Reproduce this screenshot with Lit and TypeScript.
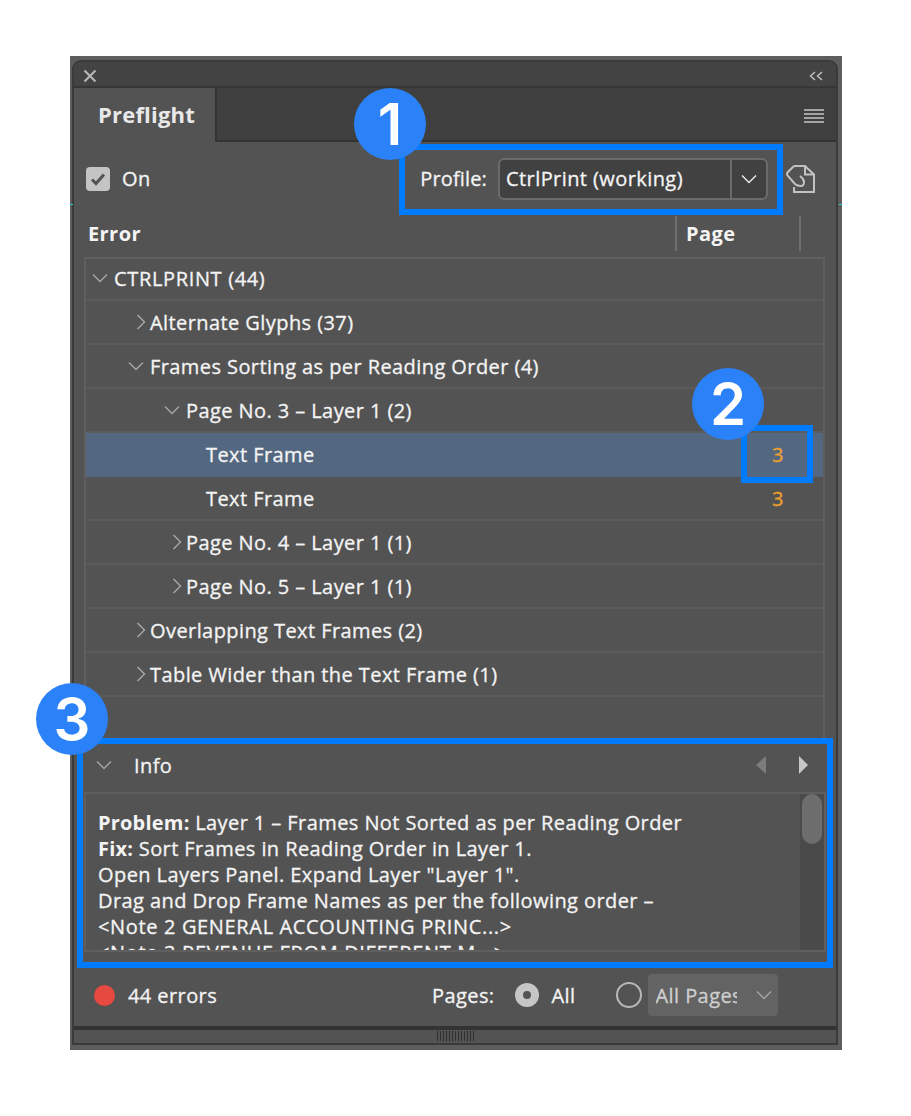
import { LitElement, html, css } from "lit";
import { customElement } from "lit/decorators.js";

const down = (c = "#a4a4a4") => html`<svg class="chev" width="16" height="10" viewBox="0 0 16 10"><path d="M1 1.500 8 8.500l7-7" fill="none" stroke=${c} stroke-width="1.500"/></svg>`;
const right = () => html`<svg class="chev-r" width="10" height="18" viewBox="0 0 10 18"><path d="M1.500 2 8.500 9l-7 7" fill="none" stroke="#a4a4a4" stroke-width="1.500"/></svg>`;

type Row = { text: string; chev: "d" | "r" | ""; x: number; page?: string; sel?: boolean; caps?: boolean };
const rows: Row[] = [
  { text: "CTRLPRINT (44)", chev: "d", x: 6, caps: true },
  { text: "Alternate Glyphs (37)", chev: "r", x: 50 },
  { text: "Frames Sorting as per Reading Order (4)", chev: "d", x: 42 },
  { text: "Page No. 3 – Layer 1 (2)", chev: "d", x: 78 },
  { text: "Text Frame", chev: "", x: 120, page: "3", sel: true },
  { text: "Text Frame", chev: "", x: 120, page: "3" },
  { text: "Page No. 4 – Layer 1 (1)", chev: "r", x: 86 },
  { text: "Page No. 5 – Layer 1 (1)", chev: "r", x: 86 },
  { text: "Overlapping Text Frames (2)", chev: "r", x: 50 },
  { text: "Table Wider than the Text Frame (1)", chev: "r", x: 50 },
];

@customElement("app-root")
export class AppRoot extends LitElement {
  static styles = css`
    :host { display: block; width: 911px; height: 1116px; background: #fff; font-family: "Open Sans", "Liberation Sans", sans-serif; font-size: 20px; letter-spacing: 0.42px; -webkit-text-stroke: 0.3px currentColor; color: #f4f4f4; position: relative; overflow: hidden; }
    * { box-sizing: border-box; }
    .wrap { padding: 56px 0 0 70px; }
    .outer { width: 772px; height: 994px; background: #5d5d5d; padding: 4px 4px 5px 2px; position: relative; }
    .tick { position: absolute; top: 148px; width: 3px; height: 1px; background: #19d6d6; }
    .inner { height: 100%; border: 2px solid #3a3a3a; border-radius: 9px 9px 0 0; background: #535353; display: flex; flex-direction: column; overflow: hidden; }
    .titlebar { height: 26px; flex: none; background: #434343; border-bottom: 2px solid #363636; display: flex; align-items: center; justify-content: space-between; padding: 4px 13px 0 9px; }
    .tabrow { height: 54px; flex: none; background: #3f3f3f; border-bottom: 2px solid #333; display: flex; justify-content: space-between; }
    .tab { width: 143px; height: 54px; background: #535353; border-right: 2px solid #333; font-weight: 700; font-size: 22px; letter-spacing: 0.2px; -webkit-text-stroke: 0; color: #e8e8e8; padding-left: 24px; line-height: 52px; }
    .menu { width: 20px; margin: 21px 12px 0 0; display: flex; flex-direction: column; gap: 2px; }
    .menu i { display: block; height: 2px; background: #a4a4a4; }
    .toolbar { height: 73px; flex: none; display: flex; align-items: center; padding: 0 20px 0 12px; }
    .check { width: 24px; height: 24px; border-radius: 4px; background: #c4c4c4; display: flex; align-items: center; justify-content: center; margin: 0 12px 0 0; }
    .on { flex: 1; }
    .prof { margin-right: 11px; letter-spacing: 0.15px; }
    .select { width: 270px; height: 42px; background: #414141; border: 2px solid #6b6b6b; border-radius: 6px; display: flex; align-items: center; }
    .select .v { flex: 1; padding-left: 6px; }
    .select .b { width: 36px; height: 100%; border-left: 2px solid #6b6b6b; display: flex; align-items: center; justify-content: center; }
    .select .chev { margin-right: 0; }
    .docicon { margin-left: 18px; display: block; }
    .colhead { height: 36px; flex: none; display: flex; font-weight: 700; -webkit-text-stroke: 0; padding: 1px 0 0 14px; margin-bottom: 6px; }
    .colhead .e { width: 587px; line-height: 36px; }
    .colhead .p { width: 126px; height: 35px; border-left: 2px solid #6e6e6e; border-right: 2px solid #6e6e6e; padding-left: 9px; line-height: 36px; }
    .tree { height: 484px; flex: none; margin: 0 11px 0 10px; border: 2px solid #5f5f5f; border-bottom: none; }
    .row { height: 44px; border-bottom: 2px solid #5c5c5c; display: flex; align-items: center; position: relative; }
    .row.first { height: 42px; padding-bottom: 2px; }
    .row.sel { background: #536880; border-bottom: 2px solid #536880; }
    .chev { flex: none; margin-right: 6px; }
    .chev-r { flex: none; margin-right: 4px; }
    .txt { flex: 1; white-space: nowrap; }
    .caps { letter-spacing: 0.65px; }
    .page { width: 96px; flex: none; color: #efa02c; padding-left: 45px; }
    .infohead { height: 51px; flex: none; display: flex; align-items: center; padding: 0 28px 4px 22px; }
    .infohead .l { flex: 1; padding: 2px 0 0 16px; }
    .infobox { height: 160px; flex: none; margin: 0 10px 0 10px; border: 2px solid #5f5f5f; display: flex; overflow: hidden; }
    .infotext { flex: 1; padding: 16px 0 0 12px; line-height: 26px; white-space: nowrap; overflow: hidden; }
    .infotext b { -webkit-text-stroke: 0; letter-spacing: 0.2px; }
    .scroll { width: 24px; flex: none; background: #4a4a4a; padding: 0 2px; }
    .thumb { height: 50px; background: #6d6d6d; border-radius: 10px; }
    .footer { height: 74px; flex: none; display: flex; align-items: center; padding: 12px 0 0 20px; }
    .dot { width: 21px; height: 21px; border-radius: 50%; background: #e5493f; margin-right: 13px; flex: none; }
    .err { width: 304px; flex: none; }
    .radio { width: 24px; height: 24px; border-radius: 50%; background: #c6c6c6; display: flex; align-items: center; justify-content: center; margin: 0 13px 0 20px; flex: none; }
    .radio i { width: 8px; height: 8px; border-radius: 50%; background: #535353; }
    .all { width: 40px; flex: none; }
    .radio2 { width: 26px; height: 26px; border-radius: 50%; border: 2px solid #b8b8b8; margin: 0 6px 0 24px; flex: none; }
    .pagesel { width: 130px; height: 42px; background: #636363; border-radius: 4px; display: flex; align-items: center; padding-left: 8px; color: #cfcfcf; }
    .pagesel span { width: 83px; overflow: hidden; white-space: nowrap; margin-right: 19px; }
    .splitter { height: 4px; flex: none; background: #333; }
    .grip { flex: 1; background: #535353; display: flex; justify-content: center; gap: 2px; padding-top: 1px; }
    .grip i { width: 1px; height: 10px; background: #2e2e2e; }
    .frame { position: absolute; border: 6px solid #007bfd; }
    .f1 { left: 399px; top: 144px; width: 384px; height: 71px; }
    .f2 { left: 741px; top: 425px; width: 72px; height: 58px; }
    .f3 { left: 77px; top: 738px; width: 756px; height: 230px; }
    .badge { position: absolute; width: 72px; height: 72px; border-radius: 50%; background: #2b82f8; color: #fff; font-family: "Inter", "Liberation Sans", sans-serif; font-weight: 600; font-size: 58px; letter-spacing: 0; -webkit-text-stroke: 0; line-height: 72px; text-align: center; }
    .b1 { left: 354px; top: 88px; }
    .b2 { left: 692px; top: 368px; }
    .b3 { left: 36px; top: 683px; }
  `;

  renderRow(r: Row, i: number) {
    return html`<div class="row ${r.sel ? "sel" : ""} ${i === 0 ? "first" : ""}" style="padding-left:${r.x}px">
      ${r.chev === "d" ? down() : r.chev === "r" ? right() : ""}
      <span class="txt ${r.caps ? "caps" : ""}">${r.text}</span>
      ${r.page ? html`<span class="page">${r.page}</span>` : ""}
    </div>`;
  }

  render() {
    return html`
      <div class="wrap">
        <div class="outer">
          <div class="tick" style="left:0"></div>
          <div class="tick" style="right:0"></div>
          <div class="inner">
            <div class="titlebar">
              <svg width="14" height="14" viewBox="0 0 14 14"><path d="M1.500 1.500l11 11M12.500 1.500l-11 11" stroke="#b4b4b4" stroke-width="2.200"/></svg>
              <svg width="14" height="10" viewBox="0 0 14 10"><path d="M6 1 1.500 5 6 9M13 1 8.500 5 13 9" fill="none" stroke="#c0c0c0" stroke-width="1.500"/></svg>
            </div>
            <div class="tabrow">
              <div class="tab">Preflight</div>
              <div class="menu"><i></i><i></i><i></i><i></i></div>
            </div>
            <div class="toolbar">
              <div class="check"><svg width="16" height="14" viewBox="0 0 16 14"><path d="M2 7.500 6 11.500 14 2.500" fill="none" stroke="#535353" stroke-width="3"/></svg></div>
              <span class="on">On</span>
              <span class="prof">Profile:</span>
              <div class="select"><span class="v">CtrlPrint (working)</span><div class="b">${down("#e8e8e8")}</div></div>
              <svg class="docicon" width="30" height="28" viewBox="0 0 30 28"><path d="M8 1h11l9 8.500V27H8v-5M19 1v8.500h9" fill="none" stroke="#c2c2c2" stroke-width="2"/><path d="M8 1 1.500 7.500Q.5 9 1.500 10.500L9 19Q11 21 15 21 18 21 18 17 18 14 14 11" fill="none" stroke="#c2c2c2" stroke-width="2"/></svg>
            </div>
            <div class="colhead"><div class="e">Error</div><div class="p">Page</div></div>
            <div class="tree">${rows.map((r, i) => this.renderRow(r, i))}</div>
            <div class="infohead">
              ${down()}
              <span class="l">Info</span>
              <svg width="52" height="18" viewBox="0 0 52 18"><path d="M10 0v18L0 9z" fill="#7c7c7c"/><path d="M43 0v18L52 9z" fill="#c8c8c8"/></svg>
            </div>
            <div class="infobox">
              <div class="infotext">
                <b>Problem:</b> Layer 1 – Frames Not Sorted as per Reading Order<br />
                <b>Fix:</b> Sort Frames in Reading Order in Layer 1.<br />
                Open Layers Panel. Expand Layer "Layer 1".<br />
                Drag and Drop Frame Names as per the following order –<br />
                <span class="caps">&lt;Note 2 GENERAL ACCOUNTING PRINC...&gt;</span><br />
                <span class="caps">&lt;Note 3 REVENUE FROM DIFFERENT M...&gt;</span>
              </div>
              <div class="scroll"><div class="thumb"></div></div>
            </div>
            <div class="footer">
              <div class="dot"></div>
              <span class="err">44 errors</span>
              <span>Pages:</span>
              <div class="radio"><i></i></div>
              <span class="all">All</span>
              <div class="radio2"></div>
              <div class="pagesel"><span>All Pages</span>${down()}</div>
            </div>
            <div class="splitter"></div>
            <div class="grip">${Array.from({ length: 13 }, () => html`<i></i>`)}</div>
          </div>
        </div>
      </div>
      <div class="frame f1"></div>
      <div class="frame f2"></div>
      <div class="frame f3"></div>
      <div class="badge b1">1</div>
      <div class="badge b2">2</div>
      <div class="badge b3">3</div>
    `;
  }
}
